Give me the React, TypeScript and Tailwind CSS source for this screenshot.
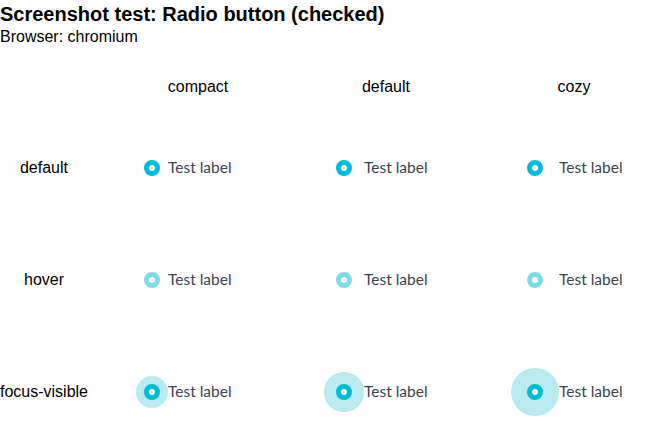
const sizes = [
  { name: "compact", halo: "w-8 h-8" },
  { name: "default", halo: "w-10 h-10" },
  { name: "cozy", halo: "w-12 h-12" },
];

const states = ["default", "hover", "focus-visible"];

function Radio({ state, halo }: { state: string; halo: string }) {
  const ring = state === "hover" ? "border-[#7edbe4]" : "border-[#00bcd4]";
  return (
    <div className="flex items-center">
      <div
        className={`${halo} rounded-full flex items-center justify-center ${
          state === "focus-visible" ? "bg-[#b8eaef]" : ""
        }`}
      >
        <span className={`w-4 h-4 rounded-full border-[5px] bg-white ${ring}`} />
      </div>
      <span
        className="text-[15.5px] text-[#3d4350] whitespace-nowrap"
        style={{ fontFamily: "Lato, sans-serif" }}
      >
        Test label
      </span>
    </div>
  );
}

export default function App() {
  return (
    <div className="bg-white text-black w-[651px] h-[432px] overflow-hidden" style={{ fontFamily: '"Liberation Sans", Arial, sans-serif' }}>
      <h3 className="text-[20px] font-bold leading-[29px]">Screenshot test: Radio button (checked)</h3>
      <p className="text-[16px] leading-[16px]">Browser: chromium</p>
      <div className="mt-[17px] grid grid-cols-[104px_188px_188px_188px]">
        <div className="h-[50px]" />
        {sizes.map((s) => (
          <div key={s.name} className="h-[50px] flex items-center justify-center text-[16px]">
            {s.name}
          </div>
        ))}
        {states.map((st) => (
          <>
            <div key={st} className="h-[112px] w-[88px] flex items-center justify-center text-[16px] whitespace-nowrap">
              {st}
            </div>
            {sizes.map((s, i) => (
              <div key={st + s.name} className={`h-[112px] flex items-center ${i === 2 ? "pl-[31px]" : "pl-8"}`}>
                <Radio state={st} halo={s.halo} />
              </div>
            ))}
          </>
        ))}
      </div>
    </div>
  );
}
